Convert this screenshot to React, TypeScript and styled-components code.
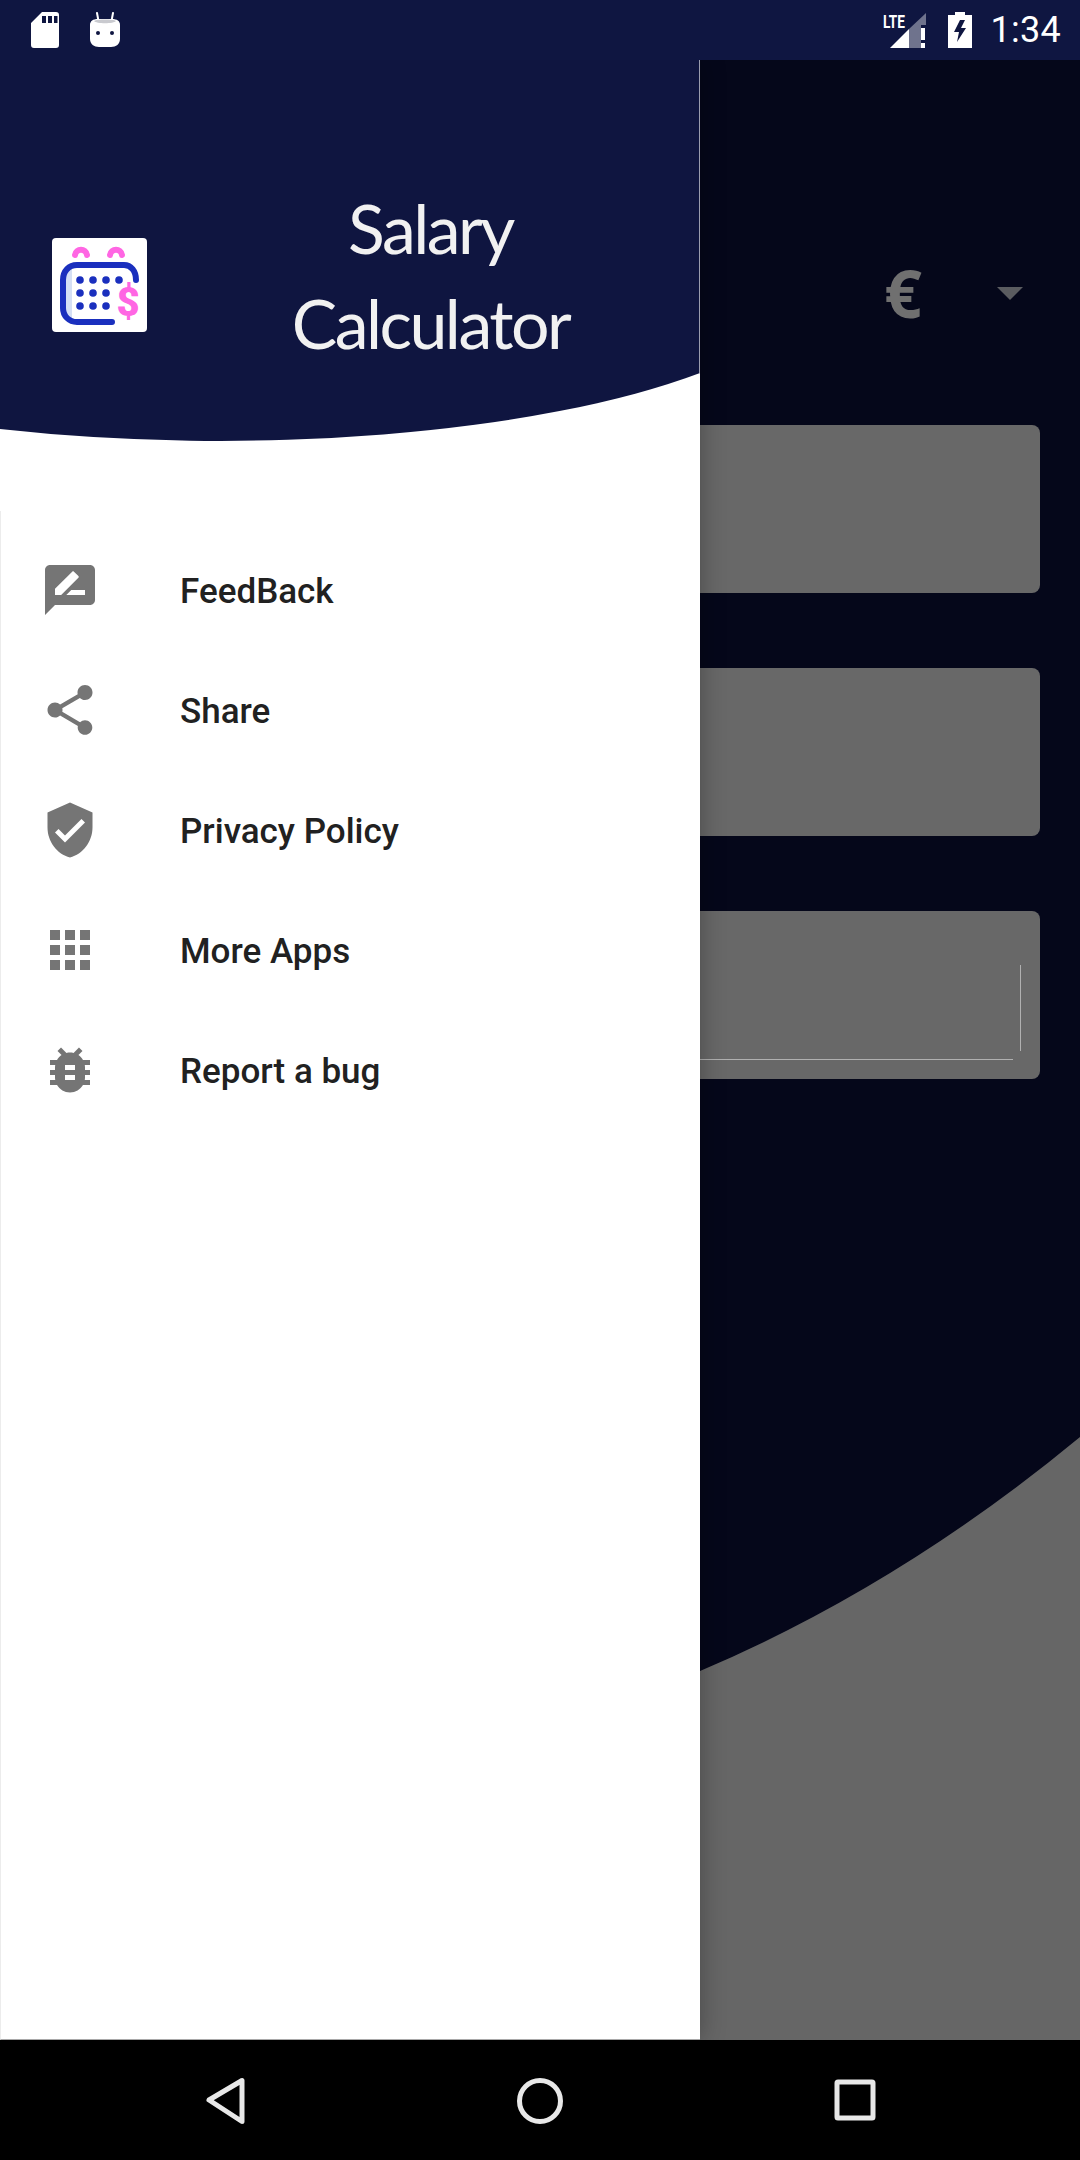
import React from 'react';
import styled, { createGlobalStyle } from 'styled-components';

const GlobalStyle = createGlobalStyle`
    html, body {
        margin: 0;
        padding: 0;
        background: #000;
    }
    * {
        box-sizing: border-box;
    }
`;

const Screen = styled.div`
    width: 1080px;
    height: 2160px;
    display: flex;
    flex-direction: column;
    overflow: hidden;
    font-family: Roboto, 'Liberation Sans', sans-serif;
`;

const StatusBar = styled.div`
    height: 60px;
    flex: none;
    background: #0f1641;
    display: flex;
    align-items: center;
    justify-content: space-between;
    padding: 0 19px 0 31px;
`;

const StatusGroup = styled.div<{ $gap: number }>`
    display: flex;
    align-items: center;
    gap: ${({ $gap }) => $gap}px;
`;

const Clock = styled.span`
    font-size: 36px;
    color: #fff;
    letter-spacing: 0.3px;
    line-height: 60px;
    margin-left: -2px;
`;

const Main = styled.div`
    flex: 1;
    position: relative;
    overflow: hidden;
    background: #05071a;
`;

const Backdrop = styled.div`
    position: relative;
    display: flex;
    flex-direction: column;
    gap: 75px;
    padding: 0 40px;
`;

const CurveArt = styled.svg`
    position: absolute;
    inset: 0;
`;

const CurrencyRow = styled.div`
    height: 290px;
    padding: 192px 17px 0 0;
    display: flex;
    justify-content: flex-end;
    gap: 75px;
`;

const Euro = styled.span`
    font-family: 'Open Sans', sans-serif;
    font-weight: 700;
    font-size: 66px;
    line-height: 80px;
    height: 80px;
    color: #707070;
`;

const Caret = styled.div`
    width: 0;
    height: 0;
    margin-top: 35px;
    border-left: 13px solid transparent;
    border-right: 13px solid transparent;
    border-top: 13px solid #5b5c60;
`;

const FieldCard = styled.div`
    position: relative;
    height: 168px;
    background: #686868;
    border-radius: 8px;
`;

const FieldLineBottom = styled.div`
    position: absolute;
    left: 0;
    right: 27px;
    bottom: 19px;
    height: 1px;
    background: #b0b0b0;
`;

const FieldLineRight = styled.div`
    position: absolute;
    right: 19px;
    top: 54px;
    height: 86px;
    width: 1px;
    background: #b0b0b0;
`;

const Drawer = styled.aside`
    position: absolute;
    top: 0;
    left: 0;
    bottom: 0;
    width: 700px;
    display: flex;
    flex-direction: column;
    background: #fff;
    box-shadow: 0 0 24px rgba(0, 0, 0, 0.3);
`;

const DrawerHeader = styled.header`
    height: 381px;
    flex: none;
    display: flex;
    align-items: flex-start;
    padding: 120px 0 0 52px;
    background: #0f1540;
    border-right: 1px solid #9a9cae;
    clip-path: path('M0 0H700V313A600 170 0 0 1 0 369Z');
`;

const LogoTile = styled.svg`
    flex: none;
    margin-top: 58px;
`;

const Title = styled.h1`
    flex: 1;
    margin: 0;
    padding-left: 14px;
    text-align: center;
    font-family: Lato, 'Open Sans', sans-serif;
    font-weight: 400;
    font-size: 68px;
    line-height: 95px;
    letter-spacing: -2.5px;
    color: #f1f1f1;
`;

const Menu = styled.nav`
    flex: 1;
    margin-top: 70px;
    padding-top: 19px;
    border-left: 1px solid #ececec;
    border-bottom: 1px solid #a8a8a8;
`;

const MenuRow = styled.div`
    height: 120px;
    display: flex;
    align-items: center;
    gap: 80px;
    padding-left: 39px;
`;

const MenuIcon = styled.svg`
    flex: none;
    fill: #757575;
`;

const MenuLabel = styled.span`
    margin-top: 2px;
    font-size: 35px;
    font-weight: 500;
    color: #212121;
`;

const NavBar = styled.div`
    height: 120px;
    flex: none;
    background: #000;
    display: flex;
    align-items: center;
    justify-content: center;
    gap: 255px;
`;

const NavIcon = styled.svg`
    fill: none;
    stroke: #e8e8e8;
    stroke-width: 5;
    stroke-linejoin: round;
`;

const menuItems = [
    {
        label: 'FeedBack',
        d: 'M20 2H4c-1.1 0-1.99.9-1.99 2L2 22l4-4h14c1.1 0 2-.9 2-2V4c0-1.1-.9-2-2-2zM6 14v-2.47l6.88-6.88c.2-.2.51-.2.71 0l1.77 1.77c.2.2.2.51 0 .71L8.47 14H6zm12 0h-7.5l2-2H18v2z',
    },
    {
        label: 'Share',
        d: 'M18 16.08c-.76 0-1.44.3-1.96.77L8.91 12.7c.05-.23.09-.46.09-.7s-.04-.47-.09-.7l7.05-4.11c.54.5 1.25.81 2.04.81 1.66 0 3-1.34 3-3s-1.34-3-3-3-3 1.34-3 3c0 .24.04.47.09.7L8.04 9.81C7.5 9.31 6.79 9 6 9c-1.66 0-3 1.34-3 3s1.34 3 3 3c.79 0 1.5-.31 2.04-.81l7.12 4.16c-.05.21-.08.43-.08.65 0 1.61 1.31 2.92 2.92 2.92 1.61 0 2.92-1.31 2.92-2.92s-1.31-2.92-2.92-2.92z',
    },
    {
        label: 'Privacy Policy',
        d: 'M12 1L3 5v6c0 5.55 3.84 10.74 9 12 5.16-1.26 9-6.45 9-12V5l-9-4zm-2 16l-4-4 1.41-1.41L10 14.17l6.59-6.59L18 9l-8 8z',
    },
    {
        label: 'More Apps',
        d: 'M4 8h4V4H4v4zm6 12h4v-4h-4v4zm-6 0h4v-4H4v4zm0-6h4v-4H4v4zm6 0h4v-4h-4v4zm6-10v4h4V4h-4zm-6 4h4V4h-4v4zm6 6h4v-4h-4v4zm0 6h4v-4h-4v4z',
    },
    {
        label: 'Report a bug',
        d: 'M20 8h-2.81c-.45-.78-1.07-1.45-1.82-1.96L17 4.41 15.59 3l-2.17 2.17C12.96 5.06 12.49 5 12 5c-.49 0-.96.06-1.41.17L8.41 3 7 4.41l1.62 1.63C7.88 6.55 7.26 7.22 6.81 8H4v2h2.09c-.05.33-.09.66-.09 1v1H4v2h2v1c0 .34.04.67.09 1H4v2h2.81c1.04 1.79 2.97 3 5.19 3s4.15-1.21 5.19-3H20v-2h-2.09c.05-.33.09-.66.09-1v-1h2v-2h-2v-1c0-.34-.04-.67-.09-1H20V8zm-6 8h-4v-2h4v2zm0-4h-4v-2h4v2z',
    },
];

const SdCardIcon = () => (
    <svg width='28' height='36' viewBox='0 0 28 36'>
        <path
            fill='#fff'
            fillRule='evenodd'
            d='M11 0h14a3 3 0 0 1 3 3v30a3 3 0 0 1-3 3H3a3 3 0 0 1-3-3V11zM11 4v7h4V4zm6 0v7h4V4zm6 0v7h3.500V4z'
        />
    </svg>
);

const AndroidIcon = () => (
    <svg width='30' height='36' viewBox='0 0 30 36'>
        <path stroke='#fff' strokeWidth='2' strokeLinecap='round' d='M7 1l1.500 8M23 1l-1.500 8' />
        <path fill='#fff' d='M8 7h14c5 0 8 2 8 6v14c0 5-4 8-9 8H9c-5 0-9-3-9-8V13c0-4 3-6 8-6z' />
        <path fill='#c9cacf' d='M4 9c3-2 19-2 22 0-2 3-20 3-22 0z' />
        <circle cx='8' cy='21' r='2' fill='#0f1641' />
        <circle cx='22' cy='21' r='2' fill='#0f1641' />
    </svg>
);

const SignalIcon = () => (
    <svg width='46' height='38' viewBox='0 0 46 38'>
        <text x='1' y='17' fontFamily='Roboto, sans-serif' fontWeight='700' fontSize='19' fill='#fff' textLength='22' lengthAdjust='spacingAndGlyphs'>
            LTE
        </text>
        <path fill='#fff' d='M8 37l19-19v19z' />
        <path fill='#fff' fillOpacity='0.4' d='M27 18L44 2v12h-5v23H27z' />
        <path fill='#fff' d='M39 17h4v12h-4zM39 32h4v5h-4z' />
    </svg>
);

const BatteryIcon = () => (
    <svg width='24' height='36' viewBox='0 0 24 36'>
        <path
            fill='#fff'
            fillRule='evenodd'
            d='M7 0h10v3h7v33H0V3h7zM17 8h-5L6 20h5l-2 10 9-14h-5z'
        />
    </svg>
);

const AppLogo = () => (
    <LogoTile width='96' height='96' viewBox='13 13 96 96'>
        <rect x='13' y='13' width='95' height='94' rx='4' fill='#fff' />
        <path d='M27 52c0-5 2-9 6-11v54c-4-2-6-5-6-9z' fill='#d5dff5' />
        <path
            d='M97 55c0-9-5-15-12-15H38c-8 0-14 6-14 15v28c0 8 6 14 14 14h35'
            fill='none'
            stroke='#1a2fbe'
            strokeWidth='6'
            strokeLinecap='round'
        />
        <path d='M36 30c1-7 11-7 12 0M71 30c1-7 11-7 12 0' fill='none' stroke='#ff66e3' strokeWidth='6' strokeLinecap='round' />
        {[41, 54, 67, 80].map((x) => (
            <circle key={x} cx={x} cy='55' r='3.800' fill='#1a2fbe' />
        ))}
        {[41, 54, 67].map((x) => (
            <React.Fragment key={x}>
                <circle cx={x} cy='68' r='3.800' fill='#1a2fbe' />
                <circle cx={x} cy='81' r='3.800' fill='#1a2fbe' />
            </React.Fragment>
        ))}
        <text x='89' y='91' textAnchor='middle' fontFamily='Roboto, sans-serif' fontWeight='900' fontSize='40' fill='#ff66e3'>
            $
        </text>
    </LogoTile>
);

export default function App() {
    return (
        <Screen>
            <GlobalStyle />
            <StatusBar>
                <StatusGroup $gap={31}>
                    <SdCardIcon />
                    <AndroidIcon />
                </StatusGroup>
                <StatusGroup $gap={20}>
                    <SignalIcon />
                    <BatteryIcon />
                    <Clock>1:34</Clock>
                </StatusGroup>
            </StatusBar>

            <Main>
                <CurveArt width='1080' height='1980' viewBox='0 0 1080 1980'>
                    <path d='M0 1980V1900L700 1611Q900 1526 1080 1377V1980Z' fill='#666666' />
                </CurveArt>
                <Backdrop>
                    <CurrencyRow>
                        <Euro>€</Euro>
                        <Caret />
                    </CurrencyRow>
                    <FieldCard />
                    <FieldCard />
                    <FieldCard>
                        <FieldLineBottom />
                        <FieldLineRight />
                    </FieldCard>
                </Backdrop>

                <Drawer>
                    <DrawerHeader>
                        <AppLogo />
                        <Title>
                            Salary
                            <br />
                            Calculator
                        </Title>
                    </DrawerHeader>
                    <Menu>
                        {menuItems.map((item) => (
                            <MenuRow key={item.label}>
                                <MenuIcon width='60' height='60' viewBox='0 0 24 24'>
                                    <path d={item.d} />
                                </MenuIcon>
                                <MenuLabel>{item.label}</MenuLabel>
                            </MenuRow>
                        ))}
                    </Menu>
                </Drawer>
            </Main>

            <NavBar>
                <NavIcon width='60' height='60' viewBox='0 0 60 60'>
                    <path d='M14 30L47 10.500V51.500z' />
                </NavIcon>
                <NavIcon width='60' height='60' viewBox='0 0 60 60'>
                    <circle cx='30' cy='31' r='20.500' />
                </NavIcon>
                <NavIcon width='60' height='60' viewBox='0 0 60 60'>
                    <rect x='12' y='12' width='36' height='36' rx='1' />
                </NavIcon>
            </NavBar>
        </Screen>
    );
}
